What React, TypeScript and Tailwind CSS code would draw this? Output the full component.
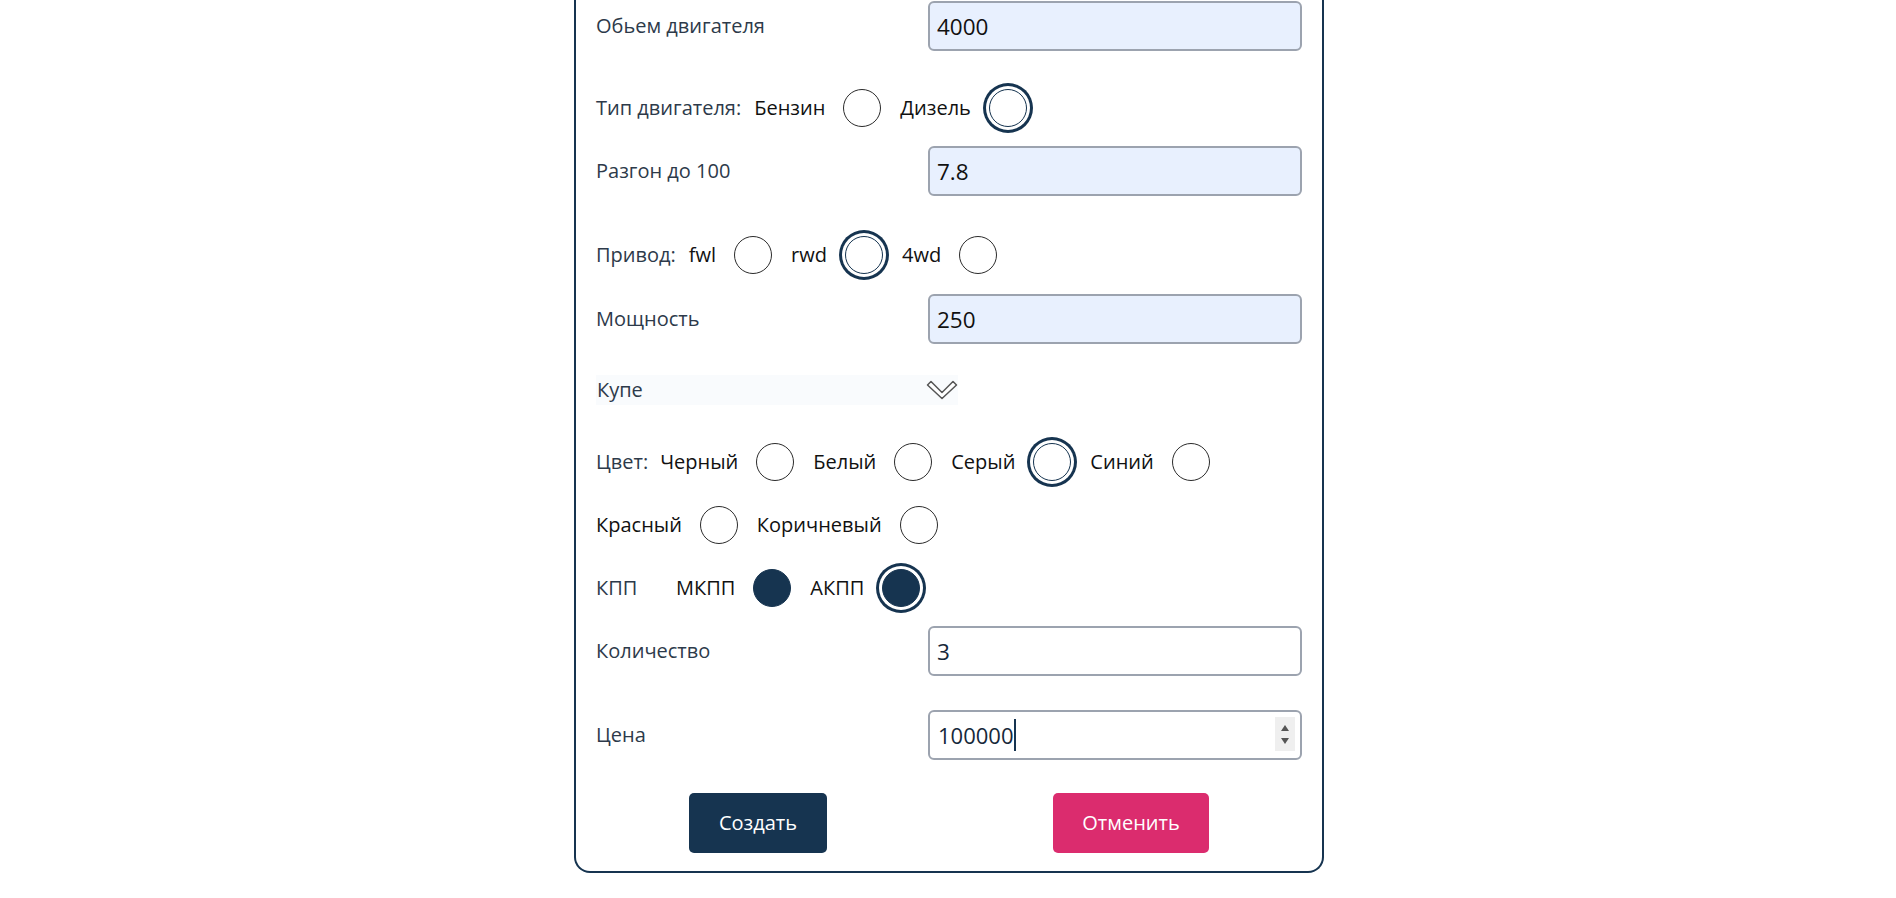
import React from 'react';

type Opt = { label: string; checked?: boolean; filled?: boolean };

const Radio: React.FC<{ checked?: boolean; filled?: boolean; name: string }> = ({ checked, filled, name }) => {
  let cls = 'appearance-none m-0 block h-[38px] w-[38px] shrink-0 rounded-full border bg-white border-[#2b2b2b]';
  if (filled) cls = 'appearance-none m-0 block h-[38px] w-[38px] shrink-0 rounded-full border bg-[#163450] border-[#163450]';
  if (checked) cls += ' shadow-[0_0_0_3px_#ffffff,0_0_0_6px_#163450] border-[1.5px] border-[#163450]';
  return <input type="radio" name={name} readOnly checked={!!checked} className={cls} />;
};

const Option: React.FC<Opt & { name: string }> = ({ label, checked, filled, name }) => (
  <label className="flex items-center gap-[18px] mr-[19px] h-[38px]">
    <span className="text-[20px] text-[#111]">{label}</span>
    <Radio name={name} checked={checked} filled={filled} />
  </label>
);

const Field: React.FC<{ label: string; value: string; autofill?: boolean; className?: string }> = ({ label, value, autofill, className }) => (
  <div className={`flex items-center h-[50px] ${className ?? ''}`}>
    <span className="w-[332px] text-[20px] text-[#2d3a4a]">{label}</span>
    <input
      readOnly
      value={value}
      className={
        autofill
          ? 'flex-1 h-[50px] rounded-[6px] border-2 border-[#9ca3af] bg-[#e8f0fe] pl-[7px] text-[22.5px] text-[#111] outline-none'
          : 'flex-1 h-[50px] rounded-[6px] border-2 border-[#9ca3af] bg-white pl-[7px] text-[22.5px] text-[#16283a] outline-none'
      }
    />
  </div>
);

export default function App() {
  return (
    <div className="min-h-screen bg-white pl-[2px] font-['Open_Sans',sans-serif]">
      <form className="mx-auto w-[750px] border-2 border-t-0 border-[#163450] rounded-b-[16px] px-[20px] pt-[1px] pb-[18px]">
        <Field label="Обьем двигателя" value="4000" autofill />

        <div className="flex items-center h-[38px] mt-[38px]">
          <span className="text-[20px] text-[#2d3a4a] mr-[13px]">Тип двигателя:</span>
          <Option name="engine" label="Бензин" />
          <Option name="engine" label="Дизель" checked />
        </div>

        <Field label="Разгон до 100" value="7.8" autofill className="mt-[19px]" />

        <div className="flex items-center h-[38px] mt-[40px]">
          <span className="text-[20px] text-[#2d3a4a] mr-[13px]">Привод:</span>
          <Option name="drive" label="fwl" />
          <Option name="drive" label="rwd" checked />
          <Option name="drive" label="4wd" />
        </div>

        <Field label="Мощность" value="250" autofill className="mt-[20px]" />

        <div className="mt-[31px] flex items-center justify-between w-[362px] h-[30px] bg-[#f9fbfd]">
          <span className="pl-[1px] text-[20px] text-[#2d3a4a]">Купе</span>
          <svg width="32" height="20" viewBox="0 0 32 20">
            <polygon points="1.5,5 5,1.5 16,12.5 27,1.5 30.5,5 16,18.5" fill="#ffffff" stroke="#555555" strokeWidth="1.5" strokeLinejoin="round" />
          </svg>
        </div>

        <div className="flex flex-wrap items-center gap-y-[25px] mt-[38px]">
          <span className="text-[20px] text-[#2d3a4a] mr-[12px]">Цвет:</span>
          <Option name="color" label="Черный" />
          <Option name="color" label="Белый" />
          <Option name="color" label="Серый" checked />
          <Option name="color" label="Синий" />
          <Option name="color" label="Красный" />
          <Option name="color" label="Коричневый" />
        </div>

        <div className="flex items-center h-[38px] mt-[25px]">
          <span className="w-[80px] text-[20px] text-[#2d3a4a]">КПП</span>
          <Option name="gear" label="МКПП" filled />
          <Option name="gear" label="АКПП" filled checked />
        </div>

        <Field label="Количество" value="3" className="mt-[19px]" />

        <div className="flex items-center h-[50px] mt-[34px]">
          <span className="w-[332px] text-[20px] text-[#2d3a4a]">Цена</span>
          <div className="relative flex-1 h-[50px] rounded-[6px] border-2 border-[#9ca3af] bg-white pl-[8px] flex items-center">
            <span className="text-[22px] text-[#16283a]">100000</span>
            <span className="ml-[1px] h-[32px] w-[1.5px] bg-[#163450]" />
            <div className="absolute right-[5px] top-[5px] flex h-[34px] w-[20px] flex-col items-center justify-center gap-[7px] bg-[#efefef]">
              <svg width="8" height="6" viewBox="0 0 8 6"><polygon points="4,0 8,6 0,6" fill="#555" /></svg>
              <svg width="8" height="6" viewBox="0 0 8 6"><polygon points="0,0 8,0 4,6" fill="#555" /></svg>
            </div>
          </div>
        </div>

        <div className="flex justify-between px-[93px] mt-[33px]">
          <button type="button" className="h-[60px] w-[138px] rounded-[5px] bg-[#163450] text-[20px] font-medium text-white">
            Создать
          </button>
          <button type="button" className="h-[60px] w-[156px] rounded-[5px] bg-[#db2c6e] text-[20px] font-medium text-white">
            Отменить
          </button>
        </div>
      </form>
    </div>
  );
}
